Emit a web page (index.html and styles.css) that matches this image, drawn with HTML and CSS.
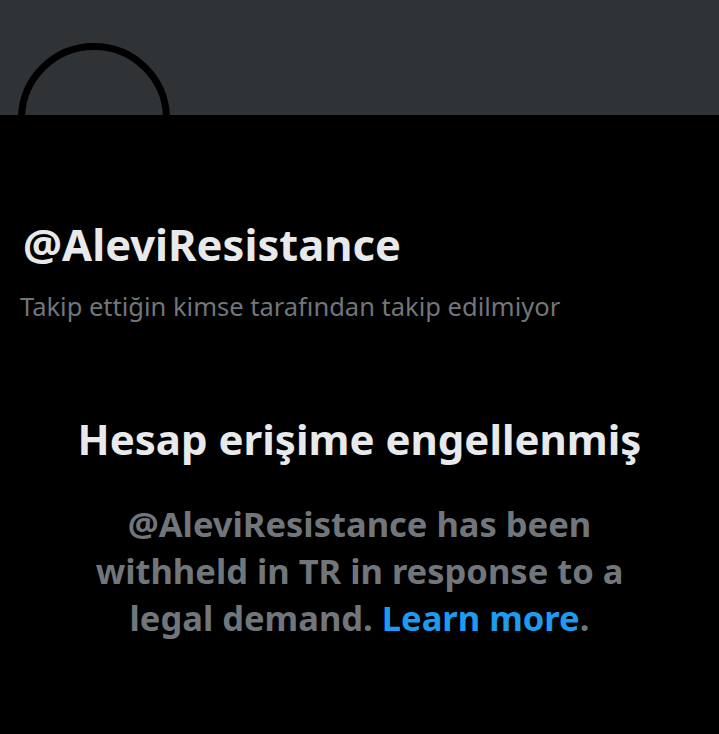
FILE: index.html
```html
<!DOCTYPE html>
<html lang="tr">
<head>
    <meta charset="UTF-8">
    <meta name="viewport" content="width=device-width, initial-scale=1.0">
    <title>@AleviResistance</title>
    <link rel="stylesheet" href="styles.css">
</head>
<body>
    <div class="banner">
        <div class="avatar"></div>
    </div>
    <div class="profile">
        <h1 class="handle">@AleviResistance</h1>
        <p class="follow-info">Takip ettiğin kimse tarafından takip edilmiyor</p>
    </div>
    <div class="withheld">
        <h2 class="withheld-title">Hesap erişime engellenmiş</h2>
        <p class="withheld-text">@AleviResistance has been withheld in TR in response to a legal demand. <a href="#" class="learn-more">Learn more</a>.</p>
    </div>
</body>
</html>
```

FILE: styles.css
```css
body {
    margin: 0;
    background-color: #000000;
    font-family: "Noto Sans", "Open Sans", sans-serif;
    color: #e7e9ea;
}
.banner {
    height: 115px;
    background-color: #2f3336; /* dark grey header */
    overflow: hidden;
    padding: 43px 0 0 18px;
    box-sizing: border-box;
}
.avatar {
    width: 152px;
    height: 152px;
    border: 7px solid #000000;
    border-radius: 50%;
    box-sizing: border-box;
}
.profile {
    padding: 103px 20px 0 20px;
}
.handle {
    margin: 0 0 0 3px;
    font-size: 43.5px;
    font-weight: 700;
    line-height: 52px;
}
.follow-info {
    margin: 19px 0 0 0;
    font-size: 25.5px;
    line-height: 34px;
    color: #71767b;
}
.withheld {
    padding: 91px 30px 0 30px;
    text-align: center;
}
.withheld-title {
    margin: 0;
    font-size: 42px;
    font-weight: 700;
    line-height: 50px;
}
.withheld-text {
    margin: 36px auto 0 auto;
    max-width: 560px;
    font-size: 34.5px;
    font-weight: 700;
    line-height: 47px;
    color: #71767b;
}
.learn-more {
    color: #1d9bf0;
    text-decoration: none;
}
```
